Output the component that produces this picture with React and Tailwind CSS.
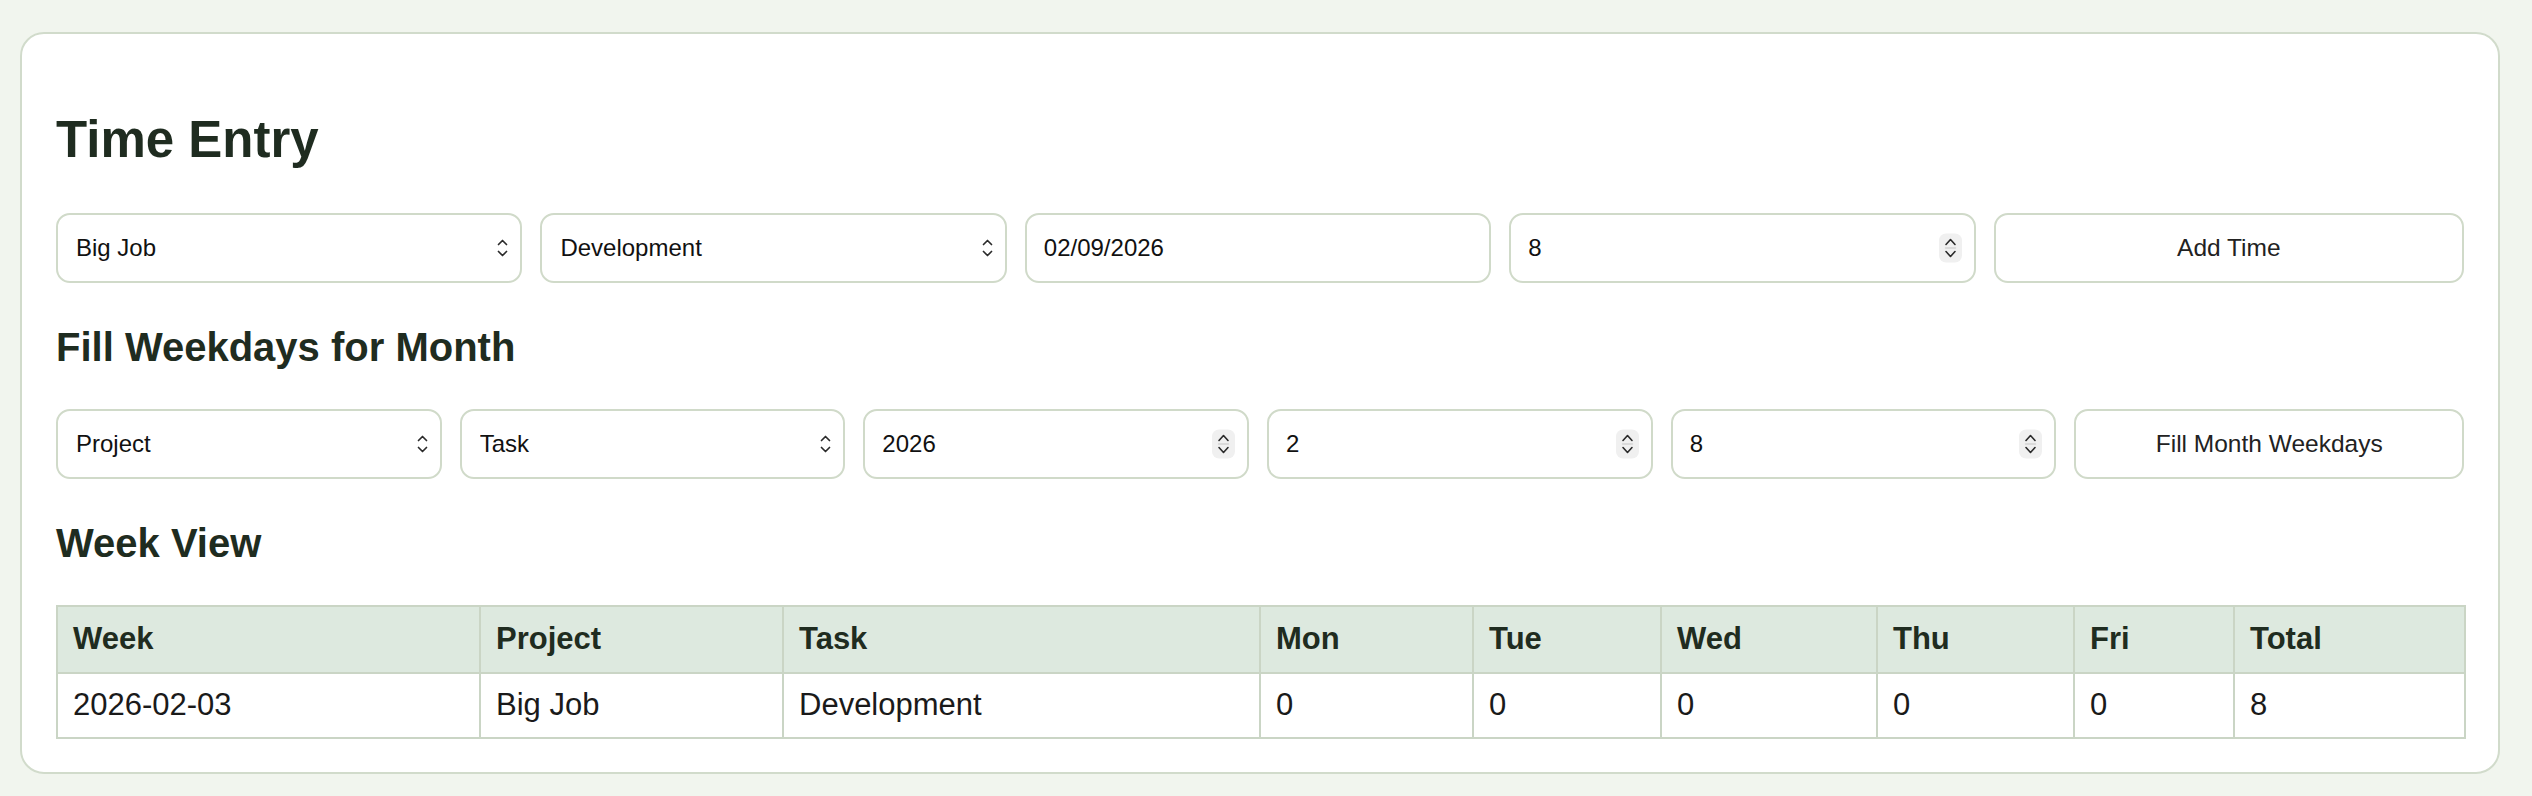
import React, { useState } from "react";

const FONT = { fontFamily: '"Liberation Sans", Arial, Helvetica, sans-serif' };

const COLS = [
  { key: "week", label: "Week", w: "w-[423px]" },
  { key: "project", label: "Project", w: "w-[303px]" },
  { key: "task", label: "Task", w: "w-[477px]" },
  { key: "mon", label: "Mon", w: "w-[213px]" },
  { key: "tue", label: "Tue", w: "w-[188px]" },
  { key: "wed", label: "Wed", w: "w-[216px]" },
  { key: "thu", label: "Thu", w: "w-[197px]" },
  { key: "fri", label: "Fri", w: "w-[160px]" },
  { key: "total", label: "Total", w: "w-[231px]" },
];

/* ===========================
      SMALL ICONS
=========================== */
function SelectChevrons() {
  return (
    <svg
      width="11"
      height="19"
      viewBox="0 0 11 19"
      fill="none"
      stroke="#2b2b2b"
      strokeWidth="1.7"
      strokeLinecap="round"
      strokeLinejoin="round"
      className="pointer-events-none absolute right-[14px] top-1/2 -translate-y-1/2"
    >
      <path d="M1.5 6 L5.5 2 L9.5 6" />
      <path d="M1.5 13 L5.5 17 L9.5 13" />
    </svg>
  );
}

function NumberSpinner() {
  return (
    <div className="pointer-events-none absolute right-[14px] top-1/2 -translate-y-1/2 w-[23px] h-[29px] rounded-[7px] bg-[#f0f0f0] flex flex-col items-center justify-center">
      <svg
        width="13"
        height="25"
        viewBox="0 0 13 25"
        fill="none"
        stroke="#2b2b2b"
        strokeWidth="1.6"
        strokeLinecap="round"
        strokeLinejoin="round"
      >
        <path d="M2 9 L6.5 4 L11 9" />
        <path d="M1.5 12.5 L11.5 12.5" stroke="#d2d2d2" strokeWidth="1.4" />
        <path d="M2 16 L6.5 21 L11 16" />
      </svg>
    </div>
  );
}

/* ===========================
      FORM CONTROLS
=========================== */
const boxClass =
  "w-full h-[70px] rounded-[14px] border-2 border-[#d0dac9] bg-white text-[24px] text-[#111] outline-none";

function SelectBox({ value, options, onChange }) {
  return (
    <div className="relative flex-1 min-w-0">
      <select
        value={value}
        onChange={(e) => onChange(e.target.value)}
        className={`${boxClass} appearance-none pl-[18px] pr-10`}
        style={FONT}
      >
        {options.map((o) => (
          <option key={o} value={o}>
            {o}
          </option>
        ))}
      </select>
      <SelectChevrons />
    </div>
  );
}

function TextBox({ value, onChange, spinner }) {
  return (
    <div className="relative flex-1 min-w-0">
      <input
        type="text"
        value={value}
        onChange={(e) => onChange(e.target.value)}
        className={`${boxClass} pl-[17px] pr-12`}
        style={FONT}
      />
      {spinner && <NumberSpinner />}
    </div>
  );
}

function ActionButton({ children, onClick }) {
  return (
    <button
      onClick={onClick}
      className="flex-1 min-w-0 h-[70px] rounded-[14px] border-2 border-[#d0dac9] bg-white text-[24.5px] text-[#222] cursor-pointer"
      style={FONT}
    >
      {children}
    </button>
  );
}

export default function App() {
  const [project, setProject] = useState("Big Job");
  const [task, setTask] = useState("Development");
  const [date, setDate] = useState("02/09/2026");
  const [hours, setHours] = useState("8");

  const [fillProject, setFillProject] = useState("Project");
  const [fillTask, setFillTask] = useState("Task");
  const [year, setYear] = useState("2026");
  const [month, setMonth] = useState("2");
  const [fillHours, setFillHours] = useState("8");

  const [rows] = useState([
    {
      week: "2026-02-03",
      project: "Big Job",
      task: "Development",
      mon: 0,
      tue: 0,
      wed: 0,
      thu: 0,
      fri: 0,
      total: 8,
    },
  ]);

  return (
    <div
      className="min-h-screen bg-[#f1f5ee] pl-[20px] pr-[32px] pt-[32px]"
      style={FONT}
    >
      <div className="rounded-[24px] border-2 border-[#d1dbcb] bg-white px-[34px] pt-[80px] pb-[33px]">
        {/* TIME ENTRY */}
        <h1 className="text-[51px] leading-none font-bold text-[#1f2c20]">
          Time Entry
        </h1>

        <div className="mt-[48px] flex gap-[18px]">
          <SelectBox
            value={project}
            options={["Big Job", "Small Job"]}
            onChange={setProject}
          />
          <SelectBox
            value={task}
            options={["Development", "Testing", "Meetings"]}
            onChange={setTask}
          />
          <TextBox value={date} onChange={setDate} />
          <TextBox value={hours} onChange={setHours} spinner />
          <ActionButton>Add Time</ActionButton>
        </div>

        {/* FILL MONTH */}
        <h2 className="mt-[44px] text-[40px] leading-none font-bold text-[#1f2c20]">
          Fill Weekdays for Month
        </h2>

        <div className="mt-[42px] flex gap-[18px]">
          <SelectBox
            value={fillProject}
            options={["Project", "Big Job", "Small Job"]}
            onChange={setFillProject}
          />
          <SelectBox
            value={fillTask}
            options={["Task", "Development", "Testing"]}
            onChange={setFillTask}
          />
          <TextBox value={year} onChange={setYear} spinner />
          <TextBox value={month} onChange={setMonth} spinner />
          <TextBox value={fillHours} onChange={setFillHours} spinner />
          <ActionButton>Fill Month Weekdays</ActionButton>
        </div>

        {/* WEEK VIEW */}
        <h2 className="mt-[44px] text-[40px] leading-none font-bold text-[#1f2c20]">
          Week View
        </h2>

        <table className="mt-[42px] w-full table-fixed border-collapse border-2 border-[#cad5c5] text-[31px]">
          <colgroup>
            {COLS.map((c) => (
              <col key={c.key} className={c.w} />
            ))}
          </colgroup>
          <thead>
            <tr className="bg-[#dde9df]">
              {COLS.map((c) => (
                <th
                  key={c.key}
                  className="h-[67px] border-2 border-[#cad5c5] px-[15px] text-left font-bold text-[#1f2c20]"
                >
                  {c.label}
                </th>
              ))}
            </tr>
          </thead>
          <tbody>
            {rows.map((r) => (
              <tr key={r.week + r.task}>
                {COLS.map((c) => (
                  <td
                    key={c.key}
                    className="h-[65px] border-2 border-[#cad5c5] px-[15px] text-[#1a1a1a]"
                  >
                    {r[c.key]}
                  </td>
                ))}
              </tr>
            ))}
          </tbody>
        </table>
      </div>
    </div>
  );
}
